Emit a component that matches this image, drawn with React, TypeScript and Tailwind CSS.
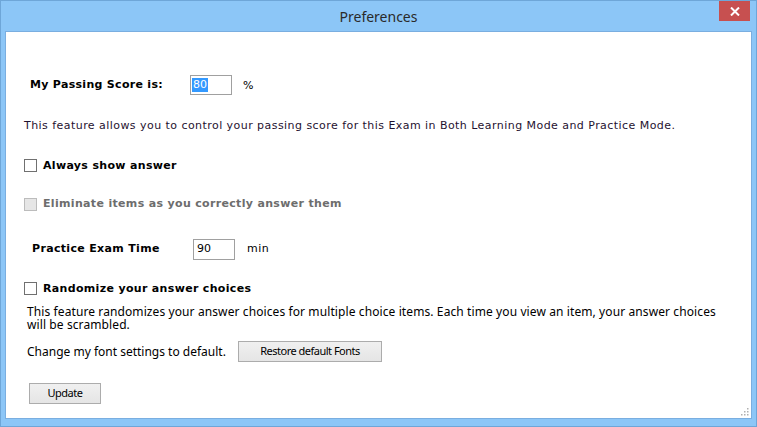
import React from 'react';

const verdana = { fontFamily: '"DejaVu Sans", Verdana, sans-serif' };
const segoe = { fontFamily: '"Noto Sans", "Open Sans", sans-serif' };

function Check({ disabled = false }: { disabled?: boolean }) {
  return (
    <span
      className={`inline-block w-[13px] h-[13px] border ${
        disabled ? 'border-[#bcbcbc] bg-[#e6e6e6]' : 'border-[#707070] bg-white'
      }`}
    />
  );
}

function WinButton({ children, className = '' }: { children: React.ReactNode; className?: string }) {
  return (
    <div
      className={`flex items-center justify-center border border-[#acacac] bg-gradient-to-b from-[#f0f0f0] to-[#e5e5e5] text-[11px] text-black tracking-[-0.5px] ${className}`}
      style={segoe}
    >
      {children}
    </div>
  );
}

export default function App() {
  return (
    <div className="w-[757px] h-[427px] bg-[#8cc6f7] border border-[#6ea6d8] flex flex-col overflow-hidden">
      {/* title bar */}
      <div className="relative h-[30px] flex items-center justify-center">
        <span className="text-[14px] text-[#2a2a2a] mt-[1px]" style={segoe}>Preferences</span>
        <div className="absolute right-[6px] top-0 w-[31px] h-[20px] bg-[#c75050] flex items-center justify-center">
          <svg width="10" height="9" viewBox="0 0 10 9">
            <path d="M1 0.5 L9 8.5 M9 0.5 L1 8.5" stroke="white" strokeWidth="2" />
          </svg>
        </div>
      </div>

      {/* content */}
      <div className="relative mx-[4px] h-[388px] bg-white border border-[#7aaee0] text-[11px] text-black tracking-[0.45px]" style={verdana}>
        <div className="flex items-center h-[20px] mt-[43px] ml-[24px]">
          <span className="font-bold tracking-[0.3px] w-[160px]">My Passing Score is:</span>
          <div className="w-[42px] h-[20px] border border-[#a0a0a0] flex items-center px-[1px]">
            <span className="bg-[#3399ff] text-white px-[1px] leading-[14px] tracking-normal">80</span>
          </div>
          <span className="ml-[11px] mt-[3px]">%</span>
        </div>

        <div className="mt-[23px] ml-[18px] text-[#1f1230]">
          This feature allows you to control your passing score for this Exam in Both Learning Mode and Practice Mode.
        </div>

        <div className="flex items-center gap-[6px] mt-[23px] ml-[18px]">
          <Check />
          <span className="font-bold tracking-[0.33px]">Always show answer</span>
        </div>

        <div className="flex items-center gap-[6px] mt-[22px] ml-[18px] text-[#6d6d6d]">
          <Check disabled />
          <span className="font-bold tracking-[0.33px]">Eliminate items as you correctly answer them</span>
        </div>

        <div className="flex items-center h-[21px] mt-[26px] ml-[26px]">
          <span className="font-bold tracking-[0.33px] w-[161px]">Practice Exam Time</span>
          <div className="w-[42px] h-[21px] border border-[#a0a0a0] flex items-center px-[3px] tracking-normal">90</div>
          <span className="ml-[12px]">min</span>
        </div>

        <div className="flex items-center gap-[6px] mt-[21px] ml-[18px]">
          <Check />
          <span className="font-bold tracking-[0.33px]">Randomize your answer choices</span>
        </div>

        <div className="mt-[8px] ml-[21px] mr-[24px] text-[12px] leading-[13px] tracking-[0.1px]" style={segoe}>
          This feature randomizes your answer choices for multiple choice items. Each time you view an item, your answer choices will be scrambled.
        </div>

        <div className="flex items-center mt-[10px] ml-[21px]">
          <span className="text-[12px] w-[211px] tracking-normal" style={segoe}>Change my font settings to default.</span>
          <WinButton className="w-[144px] h-[21px]">Restore default Fonts</WinButton>
        </div>

        <WinButton className="w-[72px] h-[21px] mt-[21px] ml-[23px]">Update</WinButton>

        <svg className="absolute right-[2px] bottom-[2px]" width="10" height="10" viewBox="0 0 10 10">
          {[
            [8, 2], [8, 5], [5, 5], [8, 8], [5, 8], [2, 8],
          ].map(([x, y], i) => (
            <rect key={i} x={x} y={y} width="1.5" height="1.5" fill="#b0b0b0" />
          ))}
        </svg>
      </div>
    </div>
  );
}
